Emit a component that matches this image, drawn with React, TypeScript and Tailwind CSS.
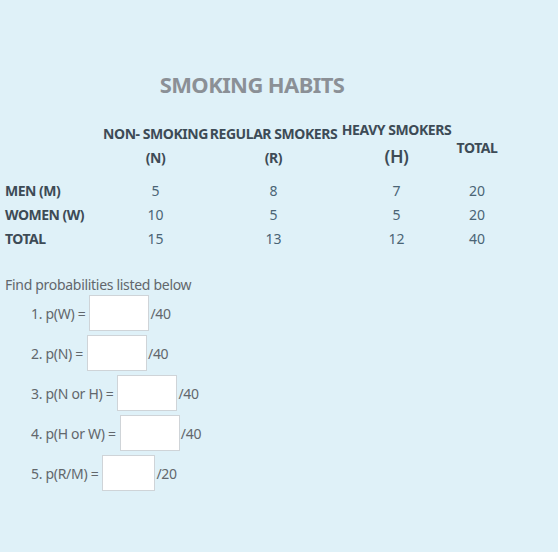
import React from "react";

const rows = [
  { label: "MEN (M)", n: "5", r: "8", h: "7", t: "20" },
  { label: "WOMEN (W)", n: "10", r: "5", h: "5", t: "20" },
  { label: "TOTAL", n: "15", r: "13", h: "12", t: "40" },
];

const questions = [
  { label: "1. p(W) =", den: "/40", w: "w-[60px]" },
  { label: "2. p(N) =", den: "/40", w: "w-[60px]" },
  { label: "3. p(N or H) =", den: "/40", w: "w-[60px]" },
  { label: "4. p(H or W) =", den: "/40", w: "w-[60px]" },
  { label: "5. p(R/M) =", den: "/20", w: "w-[53px]" },
];

export default function App() {
  return (
    <div
      className="w-[558px] h-[552px] bg-[#dff1f8] overflow-hidden"
      style={{ fontFamily: '"Noto Sans", "Open Sans", sans-serif' }}
    >
      <div className="w-[504px] pt-[68px]">
        <div className="text-center text-[22px] leading-[32px] font-bold text-[#8b9096] tracking-[-0.6px]">
          SMOKING HABITS
        </div>
      </div>
      <div className="mt-[22px] grid grid-cols-[103px_105px_131px_115px_46px] text-[#3d4b56]">
        <div />
        <div className="flex flex-col items-center justify-center text-[14px] font-bold tracking-[-0.45px] h-[48px]">
          <span className="leading-[24px] whitespace-nowrap">NON- SMOKING</span>
          <span className="leading-[24px]">(N)</span>
        </div>
        <div className="flex flex-col items-center justify-center text-[14px] font-bold tracking-[-0.45px] h-[48px]">
          <span className="leading-[24px] whitespace-nowrap">REGULAR SMOKERS</span>
          <span className="leading-[24px]">(R)</span>
        </div>
        <div className="flex flex-col items-center justify-center text-[14px] font-bold tracking-[-0.45px] h-[48px]">
          <span className="leading-[20px] whitespace-nowrap">HEAVY SMOKERS</span>
          <span className="leading-[32px] text-[18px] font-semibold">(H)</span>
        </div>
        <div className="flex items-center justify-center text-[14px] font-bold tracking-[-0.45px] h-[48px] pt-[2px]">
          TOTAL
        </div>
      </div>
      <div className="mt-[8px] grid grid-cols-[103px_105px_131px_115px_46px] auto-rows-[24px] items-center text-[14px]">
        {rows.map((r) => (
          <React.Fragment key={r.label}>
            <div className="pl-[5px] font-bold text-[14px] text-[#3d4b56] tracking-[-0.5px] whitespace-nowrap">
              {r.label}
            </div>
            <div className="text-center text-[#4a6475]">{r.n}</div>
            <div className="text-center text-[#4a6475]">{r.r}</div>
            <div className="text-center text-[#4a6475]">{r.h}</div>
            <div className="text-center text-[#4a6475]">{r.t}</div>
          </React.Fragment>
        ))}
      </div>
      <div className="mt-[25px] pl-[5px] text-[14px] leading-[20px] text-[#62676c] tracking-[-0.3px]">
        Find probabilities listed below
      </div>
      <div className="mt-[0px] flex flex-col gap-[4px] pl-[31px] text-[14px] text-[#62676c] tracking-[-0.3px]">
        {questions.map((q) => (
          <div key={q.label} className="flex items-center h-[36px]">
            <span className="whitespace-nowrap">{q.label}</span>
            <div className={`ml-[4px] h-[36px] ${q.w} bg-white border border-[#cfd4d8]`} />
            <span className="ml-[1px]">{q.den}</span>
          </div>
        ))}
      </div>
    </div>
  );
}
